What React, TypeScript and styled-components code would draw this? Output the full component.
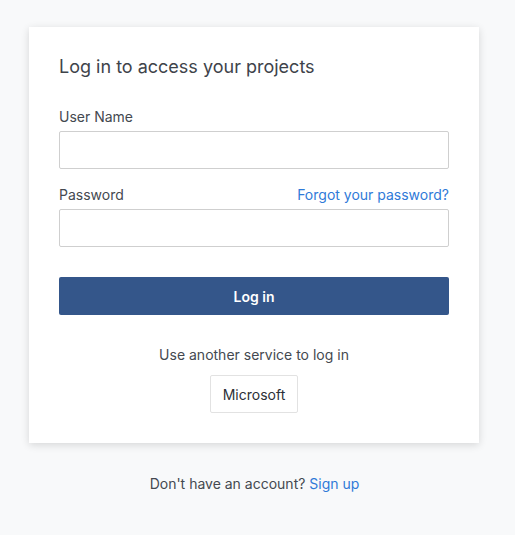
import React from "react";
import styled, { createGlobalStyle } from "styled-components";

const GlobalStyle = createGlobalStyle`
  html, body {
    margin: 0;
    padding: 0;
    background: #f8f9fa;
  }
  body {
    font-family: Inter, Roboto, "Liberation Sans", sans-serif;
    color: #444950;
  }
`;

const Page = styled.div`
  width: 515px;
  min-height: 535px;
  padding-top: 27px;
  box-sizing: border-box;
  display: flex;
  flex-direction: column;
  align-items: center;
`;

const Card = styled.div`
  width: 450px;
  box-sizing: border-box;
  background: #fff;
  padding: 29px 30px 30px;
  box-shadow: 0 2px 8px rgba(0, 0, 0, 0.14);
  margin-left: -7px;
`;

const Title = styled.h1`
  margin: 0 0 30px;
  font-weight: 400;
  font-size: 18px;
  line-height: 22px;
  color: #3e434a;
`;

const Field = styled.div<{ $gap?: number }>`
  display: flex;
  flex-direction: column;
  margin-bottom: ${(p) => p.$gap ?? 17}px;
`;

const LabelRow = styled.div`
  display: flex;
  justify-content: space-between;
  align-items: baseline;
  margin-bottom: 6px;
`;

const Label = styled.label`
  font-size: 14px;
  line-height: 17px;
  color: #444950;
`;

const Link = styled.a`
  font-size: 14px;
  line-height: 17px;
  color: #2f7ad8;
  text-decoration: none;
  cursor: pointer;
`;

const Input = styled.input`
  height: 38px;
  box-sizing: border-box;
  border: 1px solid #cfcfcf;
  border-radius: 2px;
  padding: 0 10px;
  font-size: 14px;
  outline: none;
`;

const PrimaryButton = styled.button`
  height: 38px;
  width: 100%;
  border: none;
  border-radius: 2px;
  background: #34568a;
  color: #fff;
  font-family: Inter, Roboto, sans-serif;
  font-weight: 600;
  font-size: 14px;
  cursor: pointer;
`;

const External = styled.div`
  margin-top: 31px;
  display: flex;
  flex-direction: column;
  align-items: center;
  gap: 12px;
`;

const Muted = styled.div`
  font-size: 14px;
  line-height: 17px;
  color: #444950;
`;

const ServiceButton = styled.button`
  height: 38px;
  padding: 0 12px;
  background: #fff;
  border: 1px solid #e2e2e2;
  border-radius: 2px;
  font-family: Inter, Roboto, sans-serif;
  font-size: 14px;
  color: #2c3036;
  cursor: pointer;
`;

const Footer = styled(Muted)`
  margin-top: 32px;
  margin-left: -6px;
`;

export default function App() {
  return (
    <>
      <GlobalStyle />
      <Page>
        <Card>
          <Title>Log in to access your projects</Title>
          <Field>
            <LabelRow>
              <Label>User Name</Label>
            </LabelRow>
            <Input type="text" />
          </Field>
          <Field $gap={30}>
            <LabelRow>
              <Label>Password</Label>
              <Link>Forgot your password?</Link>
            </LabelRow>
            <Input type="password" />
          </Field>
          <PrimaryButton>Log in</PrimaryButton>
          <External>
            <Muted>Use another service to log in</Muted>
            <ServiceButton>Microsoft</ServiceButton>
          </External>
        </Card>
        <Footer>
          Don't have an account? <Link>Sign up</Link>
        </Footer>
      </Page>
    </>
  );
}
